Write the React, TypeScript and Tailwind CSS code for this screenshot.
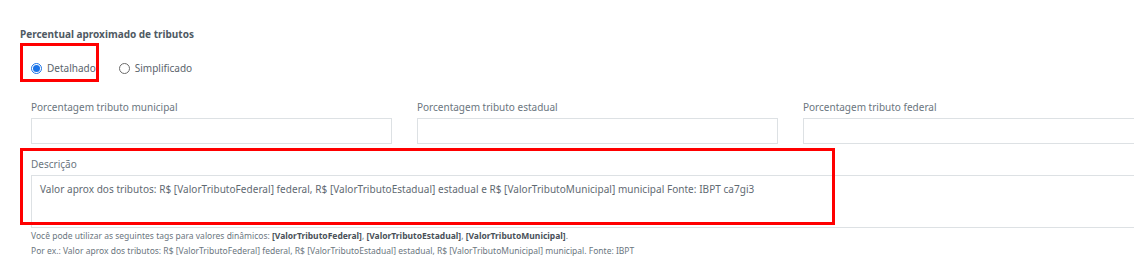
import React from "react";

const font = { fontFamily: '"Noto Sans", "Open Sans", sans-serif' };

function Radio({ checked }: { checked: boolean }) {
  return (
    <span
      className={
        "flex h-[11px] w-[11px] items-center justify-center rounded-full border " +
        (checked ? "border-[#1a73e8]" : "border-[#6b6b6b]")
      }
    >
      {checked && <span className="h-[7px] w-[7px] rounded-full bg-[#1a73e8]" />}
    </span>
  );
}

function Field({ label }: { label: string }) {
  return (
    <div className="flex flex-col">
      <label className="text-[10px] leading-[14px] text-[#6b7680]">{label}</label>
      <div className="mt-[4px] h-[26px] border border-[#dde1e4] bg-white" />
    </div>
  );
}

export default function App() {
  return (
    <div
      className="relative h-[277px] w-[1134px] overflow-hidden bg-white"
      style={font}
    >
      <div className="pl-[20px] pt-[27px] text-[10px] font-bold leading-[15px] text-[#4f5a63]">
        Percentual aproximado de tributos
      </div>

      <div className="mt-[18px] flex h-[16px] items-center pl-[31px] text-[10px] text-[#5a646c]">
        <label className="flex items-center gap-[5px]">
          <Radio checked />
          <span>Detalhado</span>
        </label>
        <label className="ml-[23px] flex items-center gap-[5px]">
          <Radio checked={false} />
          <span>Simplificado</span>
        </label>
      </div>

      <div className="mt-[24px] grid grid-cols-[361px_361px_361px] gap-x-[25px] pl-[31px]">
        <Field label="Porcentagem tributo municipal" />
        <Field label="Porcentagem tributo estadual" />
        <Field label="Porcentagem tributo federal" />
      </div>

      <div className="mt-[12px] pl-[31px]">
        <label className="block pt-[1px] text-[10px] leading-[14px] text-[#6b7680]">Descrição</label>
        <div className="mt-[4px] h-[53px] w-[1133px] border border-[#dde1e4] bg-white pl-[8px] pt-[6px] text-[10px] leading-[14px] tracking-[0.04px] text-[#5f6a72]">
          Valor aprox dos tributos: R$ [ValorTributoFederal] federal, R$ [ValorTributoEstadual] estadual e R$ [ValorTributoMunicipal] municipal Fonte: IBPT ca7gi3
        </div>
        <div className="text-[8.5px] leading-[15px] text-[#6b7680]">
          <div>
            Você pode utilizar as seguintes tags para valores dinâmicos:{" "}
            <b className="text-[#4a5159]">[ValorTributoFederal]</b>,{" "}
            <b className="text-[#4a5159]">[ValorTributoEstadual]</b>,{" "}
            <b className="text-[#4a5159]">[ValorTributoMunicipal]</b>.
          </div>
          <div>
            Por ex.: Valor aprox dos tributos: R$ [ValorTributoFederal] federal, R$ [ValorTributoEstadual] estadual, R$ [ValorTributoMunicipal] municipal. Fonte: IBPT
          </div>
        </div>
      </div>

      <div className="pointer-events-none absolute left-[20px] top-[43px] h-[39px] w-[79px] border-[3px] border-[#ff0000]" />
      <div className="pointer-events-none absolute left-[20px] top-[148px] h-[77px] w-[815px] border-[3px] border-[#ff0000]" />
    </div>
  );
}
